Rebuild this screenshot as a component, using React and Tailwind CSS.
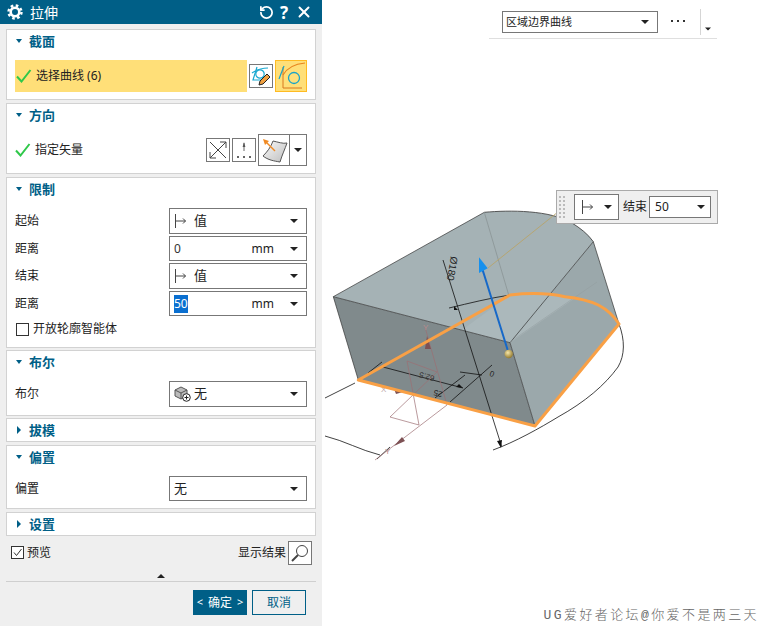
import { RotateCw, X } from 'lucide-react';

const FONT = "font-['Noto_Sans','Noto_Sans_CJK_SC',sans-serif]";

function Caret({ className = '' }) {
  return (
    <svg width="10" height="6" viewBox="0 0 10 6" className={className}>
      <path d="M1 1h8L5 5z" fill="#222" />
    </svg>
  );
}

function LimitIcon() {
  return (
    <svg width="14" height="16" viewBox="0 0 14 16" className="shrink-0">
      <path d="M1.5 1v14M1.5 8h10M9 5.5 11.5 8 9 10.5" fill="none" stroke="#444" strokeWidth="1" />
    </svg>
  );
}

function Check() {
  return (
    <svg width="16" height="14" viewBox="0 0 16 14" className="shrink-0">
      <path d="M1 7.5 5.5 12.5 14.5 1" fill="none" stroke="#2fc84a" strokeWidth="2" />
    </svg>
  );
}

function Gear() {
  return (
    <svg width="16" height="16" viewBox="0 0 16 16" className="shrink-0">
      <circle cx="8" cy="8" r="4.3" fill="none" stroke="#fff" strokeWidth="2.6" />
      <circle cx="8" cy="8" r="6.5" fill="none" stroke="#fff" strokeWidth="2.4" strokeDasharray="2.6 2.5" />
    </svg>
  );
}

function Section({ title, open = true, className = '', children }) {
  return (
    <div className={`mx-[6px] border border-[#d2d2d2] bg-white ${className}`}>
      <div className="flex h-[23px] shrink-0 items-center pl-[8px]">
        {open ? (
          <svg width="8" height="5" viewBox="0 0 8 5"><path d="M1 0h6L4 4z" fill="#005f87" /></svg>
        ) : (
          <svg width="8" height="9" viewBox="0 0 8 9" className="ml-[1px]"><path d="M1 0v8l4-4z" fill="#005f87" /></svg>
        )}
        <span className={`text-[13px] font-bold text-[#005f87] ${open ? 'ml-[6px]' : 'ml-[5px]'}`}>{title}</span>
      </div>
      {children}
    </div>
  );
}

function Select({ children, unit, h = 'h-[26px]' }) {
  return (
    <div className={`flex w-[138px] items-center border border-[#777] bg-white pl-[4px] pr-[7px] text-[13px] text-[#222] ${h}`}>
      <div className="flex flex-1 items-center gap-[6px]">{children}</div>
      {unit && <span className="mr-[15px] text-[12px]">{unit}</span>}
      <Caret />
    </div>
  );
}

function Row({ label, mb = 'mb-[2px]', children }) {
  return (
    <div className={`flex items-center justify-between pl-[8px] pr-[8px] ${mb}`}>
      <span className="text-[12px] text-[#222]">{label}</span>
      {children}
    </div>
  );
}

function IconBox({ className = '', children }) {
  return <div className={`flex items-center justify-center border border-[#777] bg-white ${className}`}>{children}</div>;
}

function Panel() {
  return (
    <div className="flex h-[626px] w-[322px] shrink-0 flex-col bg-[#efefef]">
      <div className="flex h-[24px] shrink-0 items-center bg-[#005f87] pl-[7px] pr-[9px] text-white">
        <Gear />
        <span className="ml-[7px] flex-1 text-[14px]">拉伸</span>
        <RotateCw size={15} strokeWidth={2.8} className="-scale-x-100" />
        <span className="ml-[6px] text-[17px] font-bold leading-none">?</span>
        <X size={18} strokeWidth={2.6} className="ml-[7px]" />
      </div>

      <Section title="截面" className="mt-[5px] h-[71px]">
        <div className="mt-[7px] flex items-center pl-[8px]">
          <div className="flex h-[32px] w-[232px] items-center gap-[4px] bg-[#ffdf78] pl-[1px] text-[12px] text-[#222]">
            <Check />
            <span>选择曲线 (6)</span>
          </div>
          <IconBox className="ml-[2px] h-[24px] w-[24px]">
            <svg width="22" height="22" viewBox="0 0 22 22">
              <path d="M2 8C6 5 11 3 18 3M7 2 3 15H11" fill="none" stroke="#18a8d0" strokeWidth="1.2" />
              <circle cx="10" cy="9" r="4.2" fill="none" stroke="#18a8d0" strokeWidth="1.2" />
              <path d="M9 20l1-4 7-7 3 3-7 7z" fill="#f0a040" stroke="#222" strokeWidth="1" />
            </svg>
          </IconBox>
          <div className="ml-[2px] flex h-[32px] w-[32px] items-center justify-center border border-[#ffbb22] bg-[#ffdf78]">
            <svg width="30" height="30" viewBox="0 0 30 30">
              <path d="M7 6v21h19" fill="none" stroke="#d8781e" strokeWidth="1" />
              <path d="M7 14C11 7 18 3 29 2" fill="none" stroke="#e8841e" strokeWidth="1.2" />
              <path d="M3 18 8 5" fill="none" stroke="#1aa3c8" strokeWidth="1.2" />
              <circle cx="18" cy="17" r="5.5" fill="none" stroke="#1aa3c8" strokeWidth="1.3" />
            </svg>
          </div>
        </div>
      </Section>

      <Section title="方向" className="mt-[3px] h-[71px]">
        <div className="mt-[7px] flex h-[32px] items-center pl-[8px] pr-[8px]">
          <Check />
          <span className="ml-[4px] flex-1 text-[12px] text-[#222]">指定矢量</span>
          <IconBox className="h-[24px] w-[24px]">
            <svg width="20" height="20" viewBox="0 0 20 20">
              <path d="M2 2 18 18M18 2 2 18M12 2h6v6M2 12v6h6" fill="none" stroke="#444" strokeWidth="1" />
            </svg>
          </IconBox>
          <IconBox className="ml-[2px] h-[24px] w-[24px]">
            <svg width="20" height="20" viewBox="0 0 20 20">
              <path d="M10 3v8" stroke="#666" strokeWidth="1" />
              <path d="M10 2 8.6 7h2.8z" fill="#555" />
              <path d="M3 17h2M9 17h2M15 17h2" stroke="#333" strokeWidth="1.6" />
            </svg>
          </IconBox>
          <div className="ml-[2px] flex h-[32px] w-[49px] border border-[#777] bg-white">
            <div className="flex w-[31px] items-center justify-center border-r border-[#777]">
              <svg width="28" height="28" viewBox="0 0 28 28">
                <defs>
                  <linearGradient id="sf" x1="0" y1="0" x2="1" y2="1">
                    <stop offset="0" stopColor="#fafafa" />
                    <stop offset="1" stopColor="#bdbdbd" />
                  </linearGradient>
                </defs>
                <path d="M13 5C18 6 23 8 27 7 25 13 22 19 20 26 14 25 8 24 3 20 7 16 11 11 13 5z" fill="url(#sf)" stroke="#555" strokeWidth="1" />
                <path d="M15 15 5 5" stroke="#f08a24" strokeWidth="1.4" />
                <path d="M3 3 9 5 5 9z" fill="#f08a24" />
              </svg>
            </div>
            <div className="flex flex-1 items-center justify-center"><Caret /></div>
          </div>
        </div>
      </Section>

      <Section title="限制" className="mt-[3px] h-[171px]">
        <div className="mt-[7px]">
          <Row label="起始">
            <Select><LimitIcon /><span>值</span></Select>
          </Row>
          <Row label="距离" mb="mb-[2px]">
            <Select h="h-[25px]" unit="mm"><span className="text-[12px] text-[#333]">0</span></Select>
          </Row>
          <Row label="结束">
            <Select><LimitIcon /><span>值</span></Select>
          </Row>
          <Row label="距离" mb="mb-[4px]">
            <Select h="h-[25px]" unit="mm"><span className="bg-[#0a6fd0] text-[12px] text-white">50</span></Select>
          </Row>
          <label className="flex items-center pl-[9px] text-[12px] text-[#222]">
            <span className="mr-[4px] h-[13px] w-[13px] border border-[#333] bg-white" />
            开放轮廓智能体
          </label>
        </div>
      </Section>

      <Section title="布尔" className="mt-[2px] h-[66px]">
        <div className="mt-[7px]">
          <Row label="布尔">
            <Select>
              <svg width="18" height="18" viewBox="0 0 18 18" className="shrink-0">
                <path d="M1 5 7 2l6 3v6l-6 3-6-3z" fill="#bbb" stroke="#555" strokeWidth="1" />
                <path d="M1 5l6 3 6-3M7 8v6" fill="none" stroke="#555" strokeWidth="1" />
                <circle cx="12.5" cy="12.5" r="3.8" fill="#fff" stroke="#222" strokeWidth="1" />
                <path d="M10.5 12.5h4M12.5 10.5v4" stroke="#222" strokeWidth="1" />
              </svg>
              <span className="-ml-[4px]">无</span>
            </Select>
          </Row>
        </div>
      </Section>

      <Section title="拔模" open={false} className="mt-[2px] h-[24px]" />

      <Section title="偏置" className="mt-[3px] h-[64px]">
        <div className="mt-[7px]">
          <Row label="偏置">
            <Select h="h-[25px]"><span>无</span></Select>
          </Row>
        </div>
      </Section>

      <Section title="设置" open={false} className="mt-[3px] h-[24px]" />

      <div className="mt-[4px] flex h-[25px] items-center pl-[11px] pr-[10px] text-[12px] text-[#222]">
        <span className="flex h-[13px] w-[13px] items-center justify-center border border-[#333] bg-white">
          <svg width="11" height="11" viewBox="0 0 11 11"><path d="M2 5.5 4.5 8.5 9.5 2" fill="none" stroke="#333" strokeWidth="1" /></svg>
        </span>
        <span className="ml-[3px] flex-1">预览</span>
        <span className="mr-[2px]">显示结果</span>
        <IconBox className="h-[24px] w-[24px] bg-[#efefef]">
          <svg width="20" height="20" viewBox="0 0 20 20">
            <circle cx="12" cy="8" r="5.5" fill="none" stroke="#444" strokeWidth="1" />
            <path d="M8 12 2 18" stroke="#444" strokeWidth="2" />
          </svg>
        </IconBox>
      </div>

      <div className="flex h-[16px] items-end justify-center pb-[2px]">
        <svg width="10" height="6" viewBox="0 0 10 6"><path d="M1 5h8L5 1z" fill="#222" /></svg>
      </div>
      <div className="mx-[6px] border-t border-[#cfcfcf]" />

      <div className="mt-[8px] flex justify-end gap-[5px] pr-[16px]">
        <button className="flex h-[25px] w-[54px] items-center justify-center gap-[5px] bg-[#005f87] text-[12px] text-white">
          <span className="text-[11px]">&lt;</span>确定<span className="text-[11px]">&gt;</span>
        </button>
        <button className="h-[25px] w-[54px] border border-[#005f87] text-[12px] text-[#005f87]">取消</button>
      </div>
    </div>
  );
}

const TOP = '333.3,296.7 484.3,212.3';
const ORANGE = 'M358.3 380 510 295 C528 293 548 293 565 296.7 578 298 590 301 598.3 305 606 309 614 316 619 324 L535 426Z';

function Scene() {
  // coordinates are page pixels, the svg starts at the left edge of the canvas (x = 322)
  return (
    <svg width="438" height="626" viewBox="322 0 438 626" className="absolute left-0 top-0">
      <path d={`M${TOP} C510 210 550 210 572 223 580 228 588 234 593.3 241.7 L510 342.7Z`} fill="#a5b2b5" />
      <path d="M333.3 296.7 510 342.7 535 426 358.3 380Z" fill="#808a8c" />
      <path d="M510 342.7 593.3 241.7 619 324 535 426Z" fill="#9ba8ab" />
      <path d="M510 295 535 293.3 565 296.7 575 298 510 342.7 462 330Z" fill="#abb8bb" />
      <path d="M484.3 212.3C510 210 550 210 572 223 580 228 588 234 593.3 241.7" fill="none" stroke="#333" strokeWidth="0.8" />
      <path d="M333.3 296.7 484.3 212.3M333.3 296.7 510 342.7 593.3 241.7 619 324M333.3 296.7 358.3 380M510 342.7 535 426" fill="none" stroke="#333" strokeWidth="0.7" />
      <path d="M484.3 212.3 509 296" fill="none" stroke="#8a9496" strokeWidth="0.8" />
      <path d="M510 342 597 282" fill="none" stroke="#939d9f" strokeWidth="0.5" />

      {/* dimensions */}
      <g fill="none" stroke="#111" strokeWidth="0.8">
        <path d="M443 260 501.7 446.7M449 308C470 303 490 298 510 295" />
        <path d="M619 324C625 340 625 355 618 367 605 385 585 402 558 417 540 428 515 442 493 450" />
        <path d="M383 367 463 388M382 362 368 373M460 372 482 375M465 375 435 398M492 365 450 402" />
        <path d="M325 398 355 383M325 436C345 441 360 450 380 455M377 459 390 447" />
      </g>
      <path d="M454 306l4 4-4 0zM501 448l-4-7 5-1zM463 388l-7-1 3-3z" fill="#111" />
      <text transform="translate(451 256) rotate(100)" fontSize="10" fontFamily="Liberation Sans" fill="#222">Ø180</text>
      <text transform="translate(435 376) rotate(195)" fontSize="8" fontFamily="Liberation Sans" fill="#333">62.5</text>
      <text transform="translate(443 392) rotate(195)" fontSize="8" fontFamily="Liberation Sans" fill="#222">25</text>
      <text transform="translate(495 372) rotate(200)" fontSize="8" fontFamily="Liberation Sans" fill="#222">0</text>

      {/* datum csys */}
      <g fill="none" stroke="#9c6f72" strokeWidth="0.7">
        <path d="M425 327 447 405 375 460" />
        <path d="M407 361 437 372 390 417 419 425Z" />
      </g>
      <path d="M427 336l4 13-6 0z" fill="#7d5154" />
      <path d="M394 446l8-9 3 4z" fill="#7d5154" />
      <path d="M394 389l9 3-7 2z" fill="#7d5154" />
      <text x="423" y="330" fontSize="8" fontFamily="Liberation Sans" fill="#b58a8c">Y</text>
      <text x="381" y="392" fontSize="8" fontFamily="Liberation Sans" fill="#b9a4a5">X</text>
      <text x="385" y="454" fontSize="8" fontFamily="Liberation Sans" fill="#b58a8c">Y</text>

      <path d="M488 268 556.7 213" fill="none" stroke="#b8a46a" strokeWidth="0.9" />
      <path d={ORANGE} fill="none" stroke="#f9a045" strokeWidth="3" strokeLinejoin="round" />

      {/* drag handle */}
      <path d="M507.7 350 482 268" fill="none" stroke="#1668c8" strokeWidth="2" />
      <path d="M479 257.3 479 273 487.7 268.3Z" fill="#1590ee" />
      <defs>
        <radialGradient id="ball" cx="0.4" cy="0.35" r="0.7">
          <stop offset="0" stopColor="#f6e6a8" />
          <stop offset="1" stopColor="#8d7328" />
        </radialGradient>
      </defs>
      <circle cx="508.7" cy="354" r="4.2" fill="url(#ball)" />
    </svg>
  );
}

function TopBar() {
  return (
    <div className="absolute left-[167px] top-[9px] flex h-[30px] w-[228px] items-start border-b border-[#dfdfdf] pl-[13px]">
      <div className="mt-[2px] flex h-[22px] w-[156px] items-center border border-[#777] bg-white pl-[3px] pr-[7px] text-[11px] text-[#222]">
        <span className="flex-1">区域边界曲线</span>
        <Caret />
      </div>
      <div className="mt-[11px] ml-[13px] flex gap-[4px]">
        <span className="h-[2px] w-[2px] bg-[#333]" />
        <span className="h-[2px] w-[2px] bg-[#333]" />
        <span className="h-[2px] w-[2px] bg-[#333]" />
      </div>
      <div className="ml-[15px] h-[26px] border-l border-[#d5d5d5]" />
      <Caret className="ml-[2px] mt-[17px] scale-75" />
    </div>
  );
}

function FloatBar() {
  return (
    <div className="absolute left-[234px] top-[190px] flex h-[34px] w-[162px] items-center border border-[#aaa] bg-[#efefef] pl-[2px] text-[12px] text-[#222]">
      <div className="grid grid-cols-2 gap-x-[2px] gap-y-[2px]">
        {Array.from({ length: 12 }).map((_, i) => (
          <span key={i} className="h-[2px] w-[2px] bg-[#bbb]" />
        ))}
      </div>
      <div className="ml-[9px] flex h-[26px] w-[45px] items-center justify-between border border-[#777] bg-white pl-[6px] pr-[5px]">
        <LimitIcon />
        <Caret />
      </div>
      <span className="ml-[4px]">结束</span>
      <div className="ml-[2px] flex h-[22px] w-[62px] items-center justify-between border border-[#777] bg-white pl-[5px] pr-[4px]">
        <span>50</span>
        <Caret />
      </div>
    </div>
  );
}

export default function App() {
  return (
    <div className={`flex h-[626px] w-[760px] overflow-hidden bg-white ${FONT}`}>
      <Panel />
      <div className="relative flex-1">
        <Scene />
        <TopBar />
        <FloatBar />
        <div className="absolute bottom-[1px] right-[1px] font-['Liberation_Mono','Noto_Sans_CJK_SC',monospace] text-[13px] font-light tracking-[2.4px] text-[#666]">
          UG爱好者论坛@你爱不是两三天
        </div>
      </div>
    </div>
  );
}
